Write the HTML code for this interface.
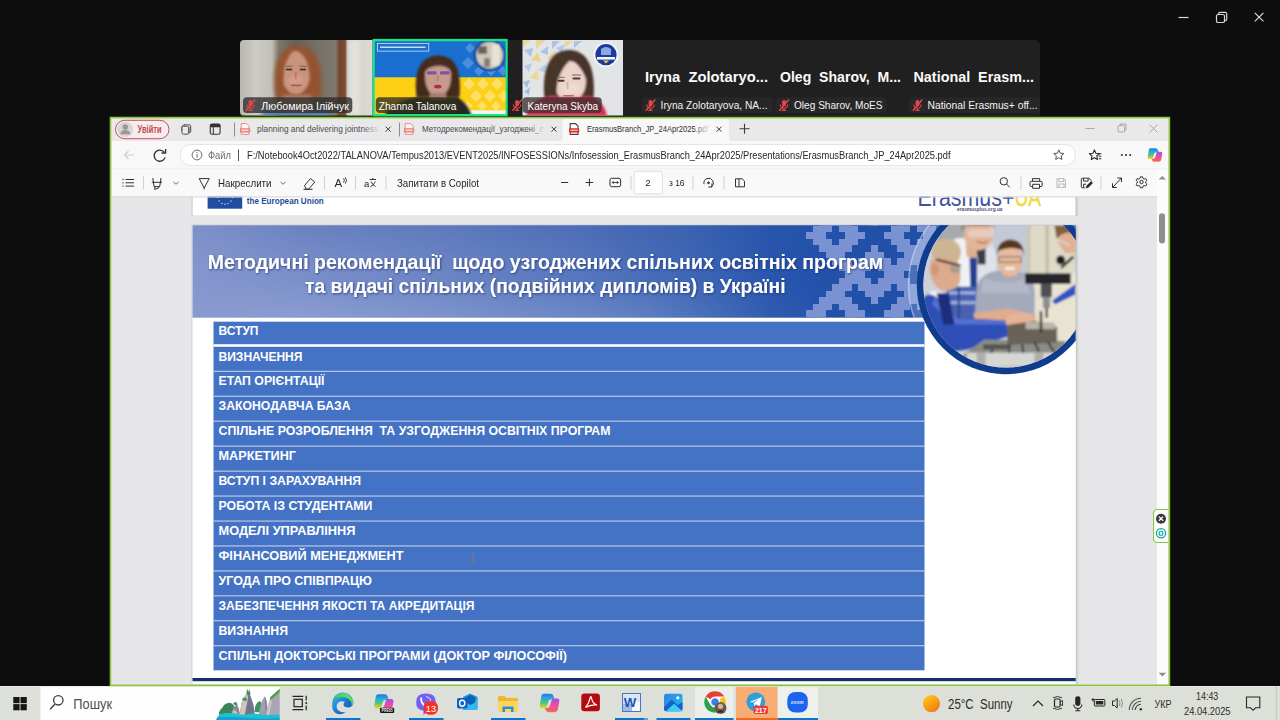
<!DOCTYPE html>
<html lang="uk">
<head>
<meta charset="utf-8">
<title>Zoom Meeting</title>
<style>
*{box-sizing:border-box;margin:0;padding:0}
html,body{width:1280px;height:720px;overflow:hidden;background:#0d0d0d;font-family:"Liberation Sans",sans-serif;}
.abs{position:absolute}
#root{position:relative;width:1280px;height:720px;overflow:hidden;background:#0d0d0d}
svg{display:block}
svg text{font-family:"Liberation Sans",sans-serif}
/* ---------- zoom strip ---------- */
#strip{position:absolute;left:240px;top:40px;width:800px;height:76px;background:#1f1f1f;border-radius:6px 6px 0 0;overflow:hidden}
/* ---------- browser ---------- */
#win{position:absolute;left:110px;top:117px;width:1060px;height:569px;background:#f4f4f5}
#winin{position:absolute;left:2px;top:2px;width:1056px;height:565px;background:#e6e6e8;overflow:hidden}
#winblur{position:absolute;left:0;top:0;width:1056px;height:565px;filter:blur(.45px)}
#chrome{position:absolute;left:0;top:0}
#view{position:absolute;left:0;top:77px}
/* ---------- taskbar ---------- */
#task{position:absolute;left:0;top:686px;width:1280px;height:34px;background:#dee2dc}
</style>
</head>
<body>
<div id="root">

<!-- ZOOM WINDOW CONTROLS -->
<svg class="abs" style="left:1170px;top:5px" width="110" height="26" viewBox="0 0 110 26">
 <g stroke="#d9d9d9" stroke-width="1.2" fill="none">
  <path d="M8.500 12.500h10"/>
  <rect x="46.500" y="9.500" width="8" height="8" rx="1.600"/><path d="M48.500 9.300v-0.300q0-1.600 1.600-1.600h5q1.600 0 1.600 1.600v5q0 1.600-1.600 1.600h-0.400"/>
  <path d="M84.800 7.800l8.600 8.600M93.400 7.800l-8.600 8.600"/>
 </g>
</svg>
<!-- PARTICIPANT STRIP -->
<svg class="abs" style="left:236px;top:36px" width="808" height="82" viewBox="236 36 808 82">
 <defs>
  <clipPath id="stripclip"><path d="M244,40 H1034 a6,6 0 0 1 6,6 V116 H240 V44 a4,4 0 0 1 4,-4 Z"/></clipPath>
  <clipPath id="t1c"><path d="M244,40 H372.600 V115.400 H244 a4,4 0 0 1 -4,-4 V44 a4,4 0 0 1 4,-4 Z"/></clipPath>
  <clipPath id="t2c"><rect x="374.800" y="41.200" width="130.700" height="72.900"/></clipPath>
  <clipPath id="t3c"><rect x="522.500" y="40" width="100.500" height="75.400"/></clipPath>
  <filter id="vb" x="-10%" y="-10%" width="120%" height="120%"><feGaussianBlur stdDeviation="1.1"/></filter>
  <filter id="vb2" x="-10%" y="-10%" width="120%" height="120%"><feGaussianBlur stdDeviation="2.2"/></filter>
  <filter id="vb05" x="-10%" y="-10%" width="120%" height="120%"><feGaussianBlur stdDeviation="0.6"/></filter>
  <linearGradient id="wall1" x1="0" y1="0" x2="1" y2="0">
   <stop offset="0" stop-color="#b9b7b2"/><stop offset=".12" stop-color="#cdcbc6"/><stop offset=".24" stop-color="#c2bfb9"/><stop offset=".29" stop-color="#80766a"/>
   <stop offset=".42" stop-color="#64605a"/><stop offset=".6" stop-color="#77736a"/><stop offset=".72" stop-color="#7f786e"/><stop offset=".745" stop-color="#74452f"/>
   <stop offset=".79" stop-color="#7a4a34"/><stop offset=".81" stop-color="#d2cfc8"/><stop offset="1" stop-color="#dcdad5"/>
  </linearGradient>
  <g id="mic">
   <rect x="3.600" y="1" width="3.800" height="6.400" rx="1.900" fill="#e5454d"/>
   <path d="M1.800 5.600a3.700 3.700 0 0 0 7.400 0M5.500 9.300v2M3.400 11.400h4.200" stroke="#e5454d" stroke-width="1.100" fill="none"/>
   <path d="M10.300 0.600L0.800 11.800" stroke="#e5454d" stroke-width="1.500"/>
  </g>
 </defs>
 <g clip-path="url(#stripclip)">
  <rect x="240" y="40" width="800" height="76" fill="#202020"/>
 </g>
 <!-- tile 1 -->
 <g clip-path="url(#t1c)">
  <rect x="240" y="40" width="133" height="76" fill="url(#wall1)"/>
  <rect x="349" y="40" width="11" height="76" fill="#efeeeb" fill-opacity=".55" filter="url(#vb2)"/>
  <g filter="url(#vb2)">
   <path d="M276,98 Q270,60 288,48 Q298,42 309,48 Q325,60 321,98 Z" fill="#94532f"/>
   <rect x="283" y="96" width="28" height="20" fill="#b98d7a"/>
   <rect x="262" y="110" width="68" height="8" fill="#5b7fb0"/>
  </g>
  <g filter="url(#vb)">
   <path d="M281.500,70 Q281,52 296,51 Q310.500,52 310.500,70 Q310.500,86 303,92 Q296,96.500 289,92 Q281.500,86 281.500,70 Z" fill="#c9937e"/>
   <path d="M280,72 Q279,52 295,49 Q288,56 285,66 Q283,76 284,88 Z" fill="#9a5733"/>
   <path d="M296,49 Q313,51 312,74 L310,88 Q310,66 304,57 Z" fill="#9a5733"/>
   <ellipse cx="296" cy="80" rx="8" ry="5" fill="#d19c88"/>
  </g>
  <g filter="url(#vb05)">
   <rect x="285.800" y="68.600" width="6.500" height="1.900" rx=".9" fill="#4a3f3f"/><rect x="299.600" y="68.600" width="6.500" height="1.900" rx=".9" fill="#4a3f3f"/>
   <rect x="285.300" y="65.700" width="7.500" height="1" fill="#8a5a44"/><rect x="299.300" y="65.700" width="7.500" height="1" fill="#8a5a44"/>
   <rect x="294.800" y="72" width="2" height="7" fill="#b98069"/>
   <rect x="291" y="84.600" width="10.500" height="1.700" rx=".8" fill="#a5605a"/>
  </g>
 </g>
 <rect x="243" y="97.300" width="109.300" height="15.800" rx="4" fill="#2d2b2a" fill-opacity=".78"/>
 <use href="#mic" x="245" y="99"/>
 <text x="261.300" y="109.600" font-size="11.600" fill="#fff" textLength="87.700" lengthAdjust="spacingAndGlyphs">Любомира Ілійчук</text>
 <!-- tile 2 (active speaker) -->
 <rect x="372.600" y="38.900" width="135.100" height="77.400" fill="#18e587"/>
 <g clip-path="url(#t2c)">
  <rect x="374" y="41" width="133" height="36.500" fill="#1b6fd1"/>
  <rect x="374" y="77.400" width="133" height="37" fill="#fdd015"/>
  <rect x="455" y="110.300" width="52" height="4" fill="#f4f4f4"/>
  <g fill="#4b8fdc" filter="url(#vb05)">
   <path d="M465,48l5,-5 5,5 -5,5zM462,63l6,-6 6,6 -6,6zM474,71l5,-5 5,5 -5,5zM486,71l5,-5 5,5 -5,5zM498,71l5,-5 5,5 -5,5zM492,64l4,-4 4,4 -4,4zM501,58l4,-4 4,4 -4,4z"/>
  </g>
  <g fill="#fddf6a" filter="url(#vb05)">
   <path d="M463,84l6,-6 6,6 -6,6zM477,84l6,-6 6,6 -6,6zM491,84l6,-6 6,6 -6,6zM470,96l6,-6 6,6 -6,6zM484,96l6,-6 6,6 -6,6zM498,96l6,-6 6,6 -6,6zM463,106l5,-5 5,5 -5,5zM477,106l5,-5 5,5 -5,5zM491,106l5,-5 5,5 -5,5z"/>
  </g>
  <rect x="377.300" y="43.500" width="51.500" height="7.600" fill="none" stroke="#e9f1fb" stroke-width=".7"/>
  <rect x="380" y="46.500" width="45.500" height="1.500" fill="#f3f7fd" fill-opacity=".8"/>
  <circle cx="489.700" cy="55.300" r="16.300" fill="#1c4aa3"/>
  <g filter="url(#vb)"><circle cx="489.700" cy="55.300" r="13.800" fill="#cfc9bd"/>
   <rect x="478" y="46" width="9" height="8" fill="#6d6458"/><rect x="484" y="58" width="6" height="9" fill="#8a7a6a"/><rect x="492" y="44" width="8" height="22" fill="#e6e2d8"/></g>
  <g filter="url(#vb)">
   <path d="M416.500,97 Q413,68 426,59 Q438,52.500 450,58.500 Q462,67 459.500,97 Z" fill="#45291f"/>
   <path d="M384,116 Q392,101 418,97.500 L458,97.500 Q468,104 472,116 Z" fill="#282828"/>
   <path d="M425,76 Q424.500,63 438,62.500 Q451.500,63 451,76 Q451,88 445,93.500 Q438,97.500 431,93.500 Q425,88 425,76 Z" fill="#c79a8d"/>
   <path d="M423,74 Q424,60 440,60 Q452,61 453,74 Q448,65 438,66 Q428,66 423,74 Z" fill="#4a2d22"/>
   <rect x="430" y="93" width="16" height="6" fill="#a77d70"/>
  </g>
  <g filter="url(#vb05)"><rect x="427" y="71.200" width="9.500" height="3.400" rx="1.400" fill="#6a4aa8" fill-opacity=".85"/><rect x="440" y="71.200" width="9.500" height="3.400" rx="1.400" fill="#6a4aa8" fill-opacity=".85"/>
   <rect x="436.800" y="75" width="2" height="6" fill="#b58578"/>
   <ellipse cx="437.800" cy="86.600" rx="3.800" ry="1.900" fill="#ae2f3c"/></g>
 </g>
 <rect x="375.800" y="97.300" width="83.600" height="15.800" rx="4" fill="#33301f" fill-opacity=".8"/>
 <text x="378.800" y="109.600" font-size="11.600" fill="#fff" textLength="77.500" lengthAdjust="spacingAndGlyphs">Zhanna Talanova</text>
 <!-- tile 3 -->
 <g clip-path="url(#t3c)">
  <rect x="522" y="40" width="102" height="76" fill="#e3e4e6"/>
  <g filter="url(#vb05)">
   <path d="M523,40h7l-7,7z M536,40h10l-10,9z" fill="#ead692"/>
   <path d="M524,50l9,-2 -2,9z M540,52l8,-6 0,9z M552,41l8,0 -8,8z" fill="#a9c6e6"/>
   <path d="M531,60l7,-8 3,10z M547,58l8,-7 -1,10z" fill="#ead38c"/>
   <path d="M524,66l8,-3 -3,9z M538,70l8,-6 1,9z M556,48l9,-4 -3,9z" fill="#b4cce8"/>
   <path d="M530,78l7,-8 2,10z M545,73l5,-4 0,7z" fill="#ecd894"/>
   <path d="M523,82l7,-2 -3,8z M524,92l6,-5 -1,8z" fill="#9dbfe3"/>
   <path d="M564,41h8l-6,6z" fill="#ead692"/><path d="M574,41h8l-8,7z" fill="#a9c5e4"/>
  </g>
  <circle cx="606" cy="54.700" r="12.600" fill="#f2f3f6"/>
  <circle cx="606" cy="54.700" r="10.600" fill="#1a3b9d"/>
  <g filter="url(#vb05)"><path d="M597,57 h18 v2.600 h-18z" fill="#f4f6fb"/><path d="M601,49 q5,-4 10,0 v6 h-10z" fill="#8fa7dc"/><path d="M603,60.500 l3,3 3,-3z" fill="#e9c93f"/></g>
  <g filter="url(#vb)">
   <path d="M544.500,100 Q541,64 557,53 Q571,46 584,55.500 Q596,68 593.500,100 Z" fill="#47352c"/>
   <path d="M526,116 Q530,99 552,96 L590,96.500 Q604,100 607,116 Z" fill="#e02d5a"/>
   <path d="M554,80 Q554,64 569,61 Q584,62 586,80 Q586,92 580,97 L560,97 Q554,92 554,80 Z" fill="#edd3c7"/>
   <path d="M552,86 Q550,62 566,55 Q572,54 574,57 Q562,66 558,80 Q556,90 557,98 Z" fill="#47352c"/>
   <path d="M572,56 Q588,58 589,88 Q584,68 572,60 Z" fill="#47352c"/>
   <ellipse cx="571" cy="88" rx="8" ry="5" fill="#f0dbd0"/>
  </g>
  <g filter="url(#vb05)" fill="#4a3a38"><rect x="557.500" y="79.800" width="7" height="1.900" rx=".9"/><rect x="572.500" y="77.500" width="8" height="1.900" rx=".9"/>
   <rect x="556.500" y="76.800" width="8" height="1" fill="#7a5f55"/><rect x="572" y="74.500" width="9" height="1" fill="#7a5f55"/>
   <rect x="566.500" y="82" width="2" height="7" fill="#d9b5a6"/><rect x="563" y="95" width="11" height="1.600" rx=".8" fill="#b8686e"/></g>
 </g>
 <rect x="522.500" y="97.300" width="79.300" height="15.800" rx="4" fill="#3a3230" fill-opacity=".78"/>
 <use href="#mic" x="511.600" y="99"/>
 <text x="527.600" y="109.600" font-size="11.600" fill="#fff" textLength="70.500" lengthAdjust="spacingAndGlyphs">Kateryna Skyba</text>
 <!-- tiles 4-6 : name only -->
 <g font-weight="bold" font-size="14.200" fill="#fbfbfb">
  <text x="645" y="82.200" textLength="123" lengthAdjust="spacingAndGlyphs" xml:space="preserve">Iryna  Zolotaryo...</text>
  <text x="780" y="82.200" textLength="121" lengthAdjust="spacingAndGlyphs" xml:space="preserve">Oleg  Sharov,  M...</text>
  <text x="913.500" y="82.200" textLength="120.500" lengthAdjust="spacingAndGlyphs" xml:space="preserve">National  Erasm...</text>
 </g>
 <g fill="#272727"><rect x="641.700" y="97.300" width="131.300" height="15.600" rx="4"/><rect x="775.300" y="97.300" width="111" height="15.600" rx="4"/><rect x="908.600" y="97.300" width="131.400" height="15.600" rx="4"/></g>
 <use href="#mic" x="645" y="99"/><use href="#mic" x="778.500" y="99"/><use href="#mic" x="912" y="99"/>
 <g font-size="11.200" fill="#f3f3f3">
  <text x="660.600" y="109.300" textLength="107" lengthAdjust="spacingAndGlyphs">Iryna Zolotaryova, NA...</text>
  <text x="794" y="109.300" textLength="88.500" lengthAdjust="spacingAndGlyphs">Oleg Sharov, MoES</text>
  <text x="927.500" y="109.300" textLength="110" lengthAdjust="spacingAndGlyphs">National Erasmus+ off...</text>
 </g>
</svg>
<!-- BROWSER WINDOW -->
<div id="win"><div id="winin"><div id="winblur">
<svg id="chrome" width="1056" height="79" viewBox="112 119 1056 79" style="z-index:2">
 <defs>
  <linearGradient id="fade1" x1="0" y1="0" x2="1" y2="0"><stop offset="0" stop-color="#e9e9eb" stop-opacity="0"/><stop offset="1" stop-color="#e9e9eb"/></linearGradient>
  <linearGradient id="fade2" x1="0" y1="0" x2="1" y2="0"><stop offset="0" stop-color="#f8f8f9" stop-opacity="0"/><stop offset="1" stop-color="#f8f8f9"/></linearGradient>
  <linearGradient id="cop" x1="0" y1="0" x2="1" y2="1"><stop offset="0" stop-color="#2a9df4"/><stop offset=".35" stop-color="#36c5b0"/><stop offset=".6" stop-color="#f7b731"/><stop offset=".8" stop-color="#ee5a6f"/><stop offset="1" stop-color="#a259ff"/></linearGradient>
  <linearGradient id="cpL" x1="0" y1="0" x2="0" y2="1"><stop offset="0" stop-color="#2a6fe8"/><stop offset=".3" stop-color="#1fb0dd"/><stop offset=".6" stop-color="#46c57f"/><stop offset="1" stop-color="#f6d418"/></linearGradient>
  <linearGradient id="cpR" x1="0" y1="0" x2="0" y2="1"><stop offset="0" stop-color="#a84fe6"/><stop offset=".55" stop-color="#ef4f9c"/><stop offset="1" stop-color="#f66c45"/></linearGradient>
  <g id="copilot">
   <path d="M4.600,0.500 h6 q2.700,0 3.400,2.400 l0.900,3 h-3 q-2.300,0 -3,2.200 l-1.500,4.800 q-0.600,1.800 -2.500,1.800 h-2.200 q-2.600,0 -2.200,-2.700 l1.300,-8.300 q0.500,-3.200 2.800,-3.200z" fill="url(#cpL)"/>
   <path d="M12.400,5.200 h5 q2.700,0 2.200,2.700 l-1.300,7.600 q-0.500,3 -3.300,3 h-5.600 q-2.600,0 -3.300,-2.400 l-0.500,-1.700 h2 q2,0 2.700,-2 l1.700,-5.400 q0.500,-1.800 0.400,-1.800z" fill="url(#cpR)"/>
  </g>
  <g id="pdfico">
   <path d="M1.200 0.600h5.300l2.500 2.500v8.300h-7.800z" fill="#fdf6f5" stroke="#e9827c" stroke-width=".9"/>
   <rect x="0" y="5.200" width="10.200" height="4.300" rx=".8" fill="#ec7f79"/><rect x="1.500" y="6.600" width="7.200" height="1.400" fill="#fbe3e1"/>
  </g>
  <g id="pdficoA">
   <path d="M1.200 0.600h5.300l2.500 2.500v8.300h-7.800z" fill="#fff" stroke="#5a3a3a" stroke-width="1.100"/>
   <rect x="0" y="5.200" width="10.200" height="4.300" rx=".8" fill="#d92c25"/><rect x="1.500" y="6.600" width="7.200" height="1.300" fill="#f6c9c6"/>
  </g>
  <g id="xs"><path d="M0.500 0.500l5 5M5.500 0.500l-5 5" stroke="#3b3b3b" stroke-width="1" fill="none"/></g>
 </defs>
 <!-- tab strip -->
 <rect x="112" y="119" width="1056" height="22.500" fill="#e9e9eb"/>
 <rect x="112" y="141" width="1056" height="28" fill="#f8f8f9"/>
 <rect x="112" y="169" width="1045" height="27.300" fill="#f9f9fa"/>
 <rect x="1157" y="169" width="11" height="29" fill="#fcfcfc"/>
 <rect x="112" y="168.500" width="1056" height=".8" fill="#ececee"/>
 <rect x="112" y="196.300" width="1045" height=".8" fill="#d9d9dc"/><rect x="112" y="197.100" width="1045" height=".8" fill="#e0e0e3" fill-opacity=".7"/>
 <!-- profile pill -->
 <rect x="115.500" y="120.300" width="53.500" height="18.400" rx="9.200" fill="#f5eded" stroke="#cc5058" stroke-width="1"/>
 <circle cx="125.300" cy="129.500" r="7.800" fill="#d8d5d5"/>
 <circle cx="125.300" cy="127" r="2.800" fill="#9b9898"/><path d="M120.300 134.200a5 4.200 0 0 1 10 0z" fill="#9b9898"/>
 <text x="137.600" y="133.200" font-size="10.200" font-weight="bold" fill="#c8454e" textLength="24" lengthAdjust="spacingAndGlyphs">Увійти</text>
 <!-- workspaces + tab actions -->
 <g stroke="#555" stroke-width="1" fill="none"><rect x="184.200" y="124.800" width="6.500" height="8" rx="1.500"/><path d="M181.800 131v-4.500l3-2.300M186.500 134.300l3.500-2.200v-5.500"/><rect x="182" y="126.200" width="6.600" height="8" rx="1.500" fill="#e9e9eb"/></g>
 <rect x="210.300" y="124" width="9.800" height="10.200" rx="1.800" fill="none" stroke="#333" stroke-width="1.100"/><rect x="210.300" y="124" width="9.800" height="3.200" rx="1" fill="#333"/><path d="M213.300 127v7" stroke="#333" stroke-width="1"/>
 <path d="M234.500 122.500v14M399.500 122.500v14" stroke="#8c8c90" stroke-width="1"/>
 <!-- tab 1 -->
 <use href="#pdfico" x="240" y="123"/>
 <text x="257" y="132.400" font-size="9.300" fill="#4a4a4a" textLength="121" lengthAdjust="spacingAndGlyphs">planning and delivering jointness</text>
 <rect x="362" y="122" width="18" height="15" fill="url(#fade1)"/>
 <use href="#xs" x="385.200" y="126.200"/>
 <!-- tab 2 -->
 <use href="#pdfico" x="404" y="123"/>
 <text x="422" y="132.400" font-size="9.300" fill="#4a4a4a" textLength="121.500" lengthAdjust="spacingAndGlyphs">Методрекомендації_узгоджені_с</text>
 <rect x="528" y="122" width="18" height="15" fill="url(#fade1)"/>
 <use href="#xs" x="551" y="126.200"/>
 <!-- active tab -->
 <path d="M557.500 141.500 q5 0 5-5 v-14 q0-3.500 3.500-3.500 h159.500 q3.500 0 3.500 3.500 v14 q0 5 5 5z" fill="#f8f8f9"/>
 <use href="#pdficoA" x="569" y="123"/>
 <text x="587" y="132.400" font-size="9.300" fill="#2f2f2f" textLength="121.500" lengthAdjust="spacingAndGlyphs">ErasmusBranch_JP_24Apr2025.pdf</text>
 <rect x="694" y="122" width="16" height="15" fill="url(#fade2)"/>
 <use href="#xs" x="716" y="126.200"/>
 <path d="M739.500 128.700h10M744.500 123.700v10" stroke="#3b3b3b" stroke-width="1.100"/>
 <!-- window controls -->
 <g stroke="#a9a9ad" stroke-width="1" fill="none"><path d="M1085.500 128.500h9"/><rect x="1118" y="125.500" width="6.500" height="6.500" rx="1"/><path d="M1120 125.500v-1.500h6v6h-1.500"/><path d="M1149.500 124.500l8 8M1157.500 124.500l-8 8"/></g>
 <!-- address row -->
 <path d="M124.500 155h9.500M128.500 151l-4 4 4 4" stroke="#cfcfd2" stroke-width="1.200" fill="none"/>
 <path d="M164.200 152.200a5.600 5.600 0 1 0 .9 5.200" stroke="#2e2e2e" stroke-width="1.300" fill="none"/><path d="M165.600 149v4h-4" stroke="#2e2e2e" stroke-width="1.300" fill="none"/>
 <rect x="180.300" y="144.500" width="895.200" height="21" rx="10.500" fill="#fff" stroke="#e2e2e5" stroke-width=".9"/>
 <circle cx="197" cy="155" r="4.900" fill="none" stroke="#6b6b6b" stroke-width="1"/><path d="M197 154.200v3.200" stroke="#6b6b6b" stroke-width="1.100"/><circle cx="197" cy="152.600" r=".65" fill="#6b6b6b"/>
 <text x="208" y="158.600" font-size="10.300" fill="#6e6e6e" textLength="23" lengthAdjust="spacingAndGlyphs">Файл</text>
 <path d="M238.500 149.500v11.500" stroke="#555" stroke-width="1"/>
 <text x="247" y="158.700" font-size="10.400" fill="#262626" textLength="703.500" lengthAdjust="spacingAndGlyphs">F:/Notebook4Oct2022/TALANOVA/Tempus2013/EVENT2025/INFOSESSIONs/Infosession_ErasmusBranch_24Apr2025/Presentations/ErasmusBranch_JP_24Apr2025.pdf</text>
 <path id="star" d="M1058.80 149.90 L1060.27 153.18 L1063.84 153.56 L1061.18 155.97 L1061.92 159.49 L1058.80 157.70 L1055.68 159.49 L1056.42 155.97 L1053.76 153.56 L1057.33 153.18Z" fill="none" stroke="#555" stroke-width="1" stroke-linejoin="round"/>
 <path d="M1094.40 149.90 L1095.87 153.18 L1099.44 153.56 L1096.78 155.97 L1097.52 159.49 L1094.40 157.70 L1091.28 159.49 L1092.02 155.97 L1089.36 153.56 L1092.93 153.18Z" fill="#f8f8f9" stroke="#2b2b2b" stroke-width="1.1" stroke-linejoin="round"/>
 <path d="M1097.8 153.700h3.500M1098.600 156.200h2.700M1098.800 158.700h2.500" stroke="#2b2b2b" stroke-width="1"/>
 <g fill="#2b2b2b"><circle cx="1121.800" cy="155" r="1"/><circle cx="1126" cy="155" r="1"/><circle cx="1130.200" cy="155" r="1"/></g>
 <use href="#copilot" transform="translate(1147.300,147.800) scale(0.760)"/>
 <!-- pdf toolbar -->
 <g stroke="#303030" stroke-width="1" fill="none">
  <path d="M125.500 179.500h8.500M125.500 182.800h8.500M125.500 186.100h8.500"/><path d="M122.500 179.500h1M122.500 182.800h1M122.500 186.100h1" stroke-width="1.300"/>
  <path d="M152.800 178l1.300 8.600h5.600l1.300-8.600M151.800 182.300h10.400M155 186.600l-.3 2.800 4-1.500v-1.300"/>
  <path d="M199.200 178.600h10l-5 9.400zM204.200 188v1.500"/>
  <path d="M304.500 185.500l6-7 4.200 3.600-6 7h-2.600zM303.500 189.300h9"/>
  <path d="M561 182.500h7.200M585.600 182.500h7.600M589.400 178.700v7.600" stroke-width="1"/>
  <rect x="610" y="178.300" width="10.600" height="8.400" rx="1.600"/><path d="M612.300 182.500h6M613.600 181.200l-1.300 1.300 1.300 1.300M617 181.200l1.300 1.300-1.300 1.300" stroke-width=".9"/>
  <path d="M704.100 184.200a4.700 4.700 0 1 1 7.300 2.600M711.900 183.400v3.600h-3.600"/><circle cx="708.500" cy="182.800" r=".9" fill="#2b2b2b"/>
  <path d="M735.500 178.800h3.500v8h-3.500zM739 178.800h3.200l2.300 2.300v5.700H739"/>
  <circle cx="1003.800" cy="181.300" r="3.700"/><path d="M1006.500 184l3.300 3.300"/>
  <path d="M1032.500 181.200v-2.600h7.200v2.600M1032.600 186.500h-1.400q-1.200 0-1.200-1.200v-2.700q0-1.300 1.300-1.300h9.600q1.300 0 1.300 1.300v2.700q0 1.200-1.200 1.200h-1.400M1032.700 184.300h6.800v4h-6.800z"/>
  <path d="M1082.300 178.200h6.600l2.500 2.400v2M1082.300 178.200q-1 0-1 1v7.600q0 1 1 1h2.500M1083.500 178.300v2.800h4.600v-2.800M1083.600 187.600v-3.400h2.600"/>
  <path d="M1085.500 188.600l.5-2.700 5-5 2.200 2.200-5 5z" fill="#2b2b2b" stroke="#f9f9fa" stroke-width=".5"/>
  <path d="M1112.500 187.500l9-9.500M1117.300 178h4.200v4.200M1112.500 183.300v4.200h4.200"/>
  <g transform="translate(0,-0.800)"><circle cx="1141.500" cy="182.800" r="1.700"/>
  <path d="M1140.400 177.600h2.200l.4 1.600 1.200.7 1.600-.5 1.100 1.900-1.200 1.100v1.400l1.200 1.100-1.100 1.900-1.600-.5-1.200.7-.4 1.600h-2.200l-.4-1.600-1.200-.7-1.600.5-1.100-1.900 1.200-1.100v-1.400l-1.200-1.100 1.100-1.900 1.600.5 1.200-.7z"/></g>
 </g>
 <g stroke="#bdbdc2" stroke-width="1.100" fill="none"><path d="M1057 178.500h6.500l2 2v7h-8.500zM1059 178.500v3h4.500v-3M1059 187.500v-3.500h5v3.500"/></g>
 <g stroke="#6a6a6a" stroke-width="1" fill="none"><path d="M173.500 181.800l2.500 2.500 2.500-2.500M280.500 181.800l2.500 2.500 2.500-2.500"/></g>
 <g stroke="#d2d2d6" stroke-width="1"><path d="M143.500 176v13.500M324.500 176v13.500M355.500 176v13.500M386 176v13.500M631 176v13.500M693 176v13.500M724 176v13.500M1021 176v13.500M1101 176v13.500"/></g>
 <text x="218" y="186.500" font-size="10.400" fill="#262626" textLength="53.500" lengthAdjust="spacingAndGlyphs">Накреслити</text>
 <text x="334.500" y="187" font-size="11.500" fill="#262626">A</text><path d="M343.500 178.300q1.800 1.800 0 4.200M345.200 177.300q2.800 3 0 6.300" stroke="#262626" stroke-width=".9" fill="none"/>
 <text x="364" y="186.600" font-size="9.500" fill="#262626">a</text>
 <path d="M369.500 179.500h6.500M372.800 178v2M371 181.500q1.500 3.500 4.500 5M375.300 181.500q-1.500 4-5 5.300" stroke="#262626" stroke-width=".9" fill="none"/>
 <text x="397" y="186.500" font-size="10.400" fill="#262626" textLength="82" lengthAdjust="spacingAndGlyphs">Запитати в Copilot</text>
 <rect x="634" y="171.300" width="28.300" height="22.600" rx="2.500" fill="#fff" stroke="#dedee2" stroke-width="1"/>
 <text x="645.300" y="186.300" font-size="9.800" fill="#262626">2</text>
 <text x="669" y="186.300" font-size="9.800" fill="#262626" textLength="15.500" lengthAdjust="spacingAndGlyphs">з 16</text>
 <!-- scrollbar top arrow -->
 <path d="M1158.600 179.600l3.700-3.500 3.700 3.500z" fill="#8f8f93"/>
</svg>

<!-- PDF VIEWPORT -->
<svg id="view" width="1045" height="488" viewBox="112 196 1045 488">
 <defs>
  <linearGradient id="bn" x1="0" y1="0" x2="1" y2="0">
   <stop offset="0" stop-color="#8496cd"/><stop offset=".12" stop-color="#7a8fca"/><stop offset=".28" stop-color="#6b85c5"/><stop offset=".43" stop-color="#5877bf"/>
   <stop offset=".56" stop-color="#3f67b5"/><stop offset=".66" stop-color="#2855ad"/><stop offset=".75" stop-color="#2150a9"/><stop offset="1" stop-color="#2150a9"/>
  </linearGradient>
  <linearGradient id="bnv" x1="0" y1="0" x2="0" y2="1">
   <stop offset="0" stop-color="#21408f" stop-opacity=".16"/><stop offset=".45" stop-color="#21408f" stop-opacity="0"/><stop offset=".55" stop-color="#fff" stop-opacity="0"/><stop offset="1" stop-color="#fff" stop-opacity=".13"/>
  </linearGradient>
  <linearGradient id="lmg" x1="0" y1="0" x2="1" y2="0"><stop offset="0" stop-color="#fff" stop-opacity=".35"/><stop offset=".12" stop-color="#fff"/><stop offset=".5" stop-color="#fff"/><stop offset=".72" stop-color="#fff" stop-opacity="0"/></linearGradient>
  <mask id="lm"><rect x="192.5" y="225.200" width="883.2" height="92.5" fill="url(#lmg)"/></mask>
  <linearGradient id="pgr" x1="0" y1="0" x2="1" y2="0"><stop offset="0" stop-color="#b9b9bd"/><stop offset=".35" stop-color="#d2d2d5"/><stop offset="1" stop-color="#e6e6e8"/></linearGradient>
  <linearGradient id="pgl" x1="1" y1="0" x2="0" y2="0"><stop offset="0" stop-color="#cfcfd2"/><stop offset="1" stop-color="#e6e6e8"/></linearGradient>
  <linearGradient id="pgsh" x1="0" y1="0" x2="0" y2="1"><stop offset="0" stop-color="#c9c9cc"/><stop offset="1" stop-color="#e6e6e8"/></linearGradient>
  <clipPath id="bnclip"><rect x="192.5" y="225.2" width="883.2" height="92.5"/></clipPath>
  <clipPath id="pgclip"><rect x="192.5" y="225.2" width="883.2" height="460"/></clipPath>
  <clipPath id="p1clip"><rect x="192.5" y="196" width="883.2" height="19.2"/></clipPath>
  <clipPath id="phclip"><circle cx="1006" cy="285" r="82.6"/></clipPath>
  <filter id="b1" x="-20%" y="-20%" width="140%" height="140%"><feGaussianBlur stdDeviation="1"/></filter>
  <filter id="b2" x="-20%" y="-20%" width="140%" height="140%"><feGaussianBlur stdDeviation="2"/></filter>
  <filter id="pb" x="-5%" y="-5%" width="110%" height="110%"><feGaussianBlur stdDeviation="5.5"/></filter>
  <filter id="b05" x="-20%" y="-20%" width="140%" height="140%"><feGaussianBlur stdDeviation="0.5"/></filter>
  <filter id="tsh" x="-5%" y="-30%" width="110%" height="170%"><feDropShadow dx="0.8" dy="1" stdDeviation="0.9" flood-color="#1b2f66" flood-opacity=".75"/></filter>
 </defs>
 <rect x="112" y="196" width="1045" height="488" fill="#e6e6e8"/>
 <!-- page 1 tail -->
 <rect x="191.5" y="196" width="885.2" height="21.5" fill="url(#pgsh)"/>
 <rect x="192.5" y="196" width="883.2" height="19.2" fill="#fff"/>
 <g clip-path="url(#p1clip)">
  <rect x="207.600" y="190" width="34.600" height="18.700" fill="#1f4ea1"/>
  <g fill="#dfe2d8"><circle cx="219" cy="201" r=".7"/><circle cx="222" cy="203.500" r=".7"/><circle cx="225" cy="204.300" r=".7"/><circle cx="228" cy="203.500" r=".7"/><circle cx="231" cy="201" r=".7"/><circle cx="217.800" cy="197.500" r=".7"/><circle cx="232.200" cy="197.500" r=".7"/></g>
  <text x="246.800" y="204.300" font-size="9.6" font-weight="bold" fill="#1e4c97" textLength="77" lengthAdjust="spacingAndGlyphs">the European Union</text>
  <text x="917.500" y="205.600" font-size="26" fill="#41529b" textLength="97" lengthAdjust="spacingAndGlyphs">Erasmus+</text>
  <text x="1014.500" y="205.600" font-size="26" fill="#f1d93f" stroke="#f1d93f" stroke-width=".5" textLength="26.500" lengthAdjust="spacingAndGlyphs">UA</text>
  <text x="957" y="211.300" font-size="5.2" font-weight="bold" fill="#4b4f78" textLength="45.500" lengthAdjust="spacingAndGlyphs">erasmusplus.org.ua</text>
 </g>
 <!-- page 2 -->
 <rect x="1075.700" y="225.200" width="3.600" height="461" fill="url(#pgr)"/><rect x="1075.700" y="196" width="3.600" height="20" fill="url(#pgr)"/><rect x="190.500" y="225.200" width="2" height="461" fill="url(#pgl)"/><rect x="190.500" y="196" width="2" height="20" fill="url(#pgl)"/><rect x="192" y="224.400" width="884" height="1" fill="#d4d4d7"/>
 <rect x="192.5" y="225.200" width="883.2" height="460" fill="#fff"/>
 <rect x="192.5" y="225.200" width="883.2" height="92.5" fill="url(#bn)"/>
 <rect x="192.5" y="225.200" width="883.2" height="92.5" fill="url(#bnv)" mask="url(#lm)"/>
 <g clip-path="url(#bnclip)"><g fill="#7a92d2" shape-rendering="crispEdges"><rect x="819.45" y="219.45" width="32.50" height="6.50"/><rect x="871.45" y="219.45" width="6.50" height="6.50"/><rect x="897.45" y="219.45" width="32.50" height="6.50"/><rect x="949.45" y="219.45" width="6.50" height="6.50"/><rect x="975.45" y="219.45" width="0.00" height="6.50"/><rect x="812.95" y="225.95" width="19.50" height="6.50"/><rect x="838.95" y="225.95" width="19.50" height="6.50"/><rect x="890.95" y="225.95" width="19.50" height="6.50"/><rect x="916.95" y="225.95" width="19.50" height="6.50"/><rect x="968.95" y="225.95" width="6.50" height="6.50"/><rect x="806.45" y="232.45" width="19.50" height="6.50"/><rect x="845.45" y="232.45" width="19.50" height="6.50"/><rect x="884.45" y="232.45" width="19.50" height="6.50"/><rect x="923.45" y="232.45" width="19.50" height="6.50"/><rect x="962.45" y="232.45" width="13.00" height="6.50"/><rect x="812.95" y="238.95" width="19.50" height="6.50"/><rect x="838.95" y="238.95" width="19.50" height="6.50"/><rect x="890.95" y="238.95" width="19.50" height="6.50"/><rect x="916.95" y="238.95" width="19.50" height="6.50"/><rect x="968.95" y="238.95" width="6.50" height="6.50"/><rect x="819.45" y="245.45" width="32.50" height="6.50"/><rect x="871.45" y="245.45" width="6.50" height="6.50"/><rect x="897.45" y="245.45" width="32.50" height="6.50"/><rect x="949.45" y="245.45" width="6.50" height="6.50"/><rect x="975.45" y="245.45" width="0.00" height="6.50"/><rect x="825.95" y="251.95" width="19.50" height="6.50"/><rect x="864.95" y="251.95" width="19.50" height="6.50"/><rect x="903.95" y="251.95" width="19.50" height="6.50"/><rect x="942.95" y="251.95" width="19.50" height="6.50"/><rect x="832.45" y="258.45" width="19.50" height="6.50"/><rect x="858.45" y="258.45" width="32.50" height="6.50"/><rect x="897.45" y="258.45" width="32.50" height="6.50"/><rect x="936.45" y="258.45" width="32.50" height="6.50"/><rect x="975.45" y="258.45" width="0.00" height="6.50"/><rect x="838.95" y="264.95" width="32.50" height="6.50"/><rect x="877.95" y="264.95" width="32.50" height="6.50"/><rect x="916.95" y="264.95" width="32.50" height="6.50"/><rect x="955.95" y="264.95" width="19.50" height="6.50"/><rect x="845.45" y="271.45" width="19.50" height="6.50"/><rect x="884.45" y="271.45" width="19.50" height="6.50"/><rect x="923.45" y="271.45" width="19.50" height="6.50"/><rect x="962.45" y="271.45" width="13.00" height="6.50"/><rect x="838.95" y="277.95" width="32.50" height="6.50"/><rect x="877.95" y="277.95" width="32.50" height="6.50"/><rect x="916.95" y="277.95" width="32.50" height="6.50"/><rect x="955.95" y="277.95" width="19.50" height="6.50"/><rect x="832.45" y="284.45" width="19.50" height="6.50"/><rect x="858.45" y="284.45" width="32.50" height="6.50"/><rect x="897.45" y="284.45" width="32.50" height="6.50"/><rect x="936.45" y="284.45" width="32.50" height="6.50"/><rect x="975.45" y="284.45" width="0.00" height="6.50"/><rect x="825.95" y="290.95" width="19.50" height="6.50"/><rect x="864.95" y="290.95" width="19.50" height="6.50"/><rect x="903.95" y="290.95" width="19.50" height="6.50"/><rect x="942.95" y="290.95" width="19.50" height="6.50"/><rect x="819.45" y="297.45" width="32.50" height="6.50"/><rect x="871.45" y="297.45" width="6.50" height="6.50"/><rect x="897.45" y="297.45" width="32.50" height="6.50"/><rect x="949.45" y="297.45" width="6.50" height="6.50"/><rect x="975.45" y="297.45" width="0.00" height="6.50"/><rect x="812.95" y="303.95" width="19.50" height="6.50"/><rect x="838.95" y="303.95" width="19.50" height="6.50"/><rect x="890.95" y="303.95" width="19.50" height="6.50"/><rect x="916.95" y="303.95" width="19.50" height="6.50"/><rect x="968.95" y="303.95" width="6.50" height="6.50"/><rect x="806.45" y="310.45" width="19.50" height="6.50"/><rect x="845.45" y="310.45" width="19.50" height="6.50"/><rect x="884.45" y="310.45" width="19.50" height="6.50"/><rect x="923.45" y="310.45" width="19.50" height="6.50"/><rect x="962.45" y="310.45" width="13.00" height="6.50"/><rect x="812.95" y="316.95" width="19.50" height="6.50"/><rect x="838.95" y="316.95" width="19.50" height="6.50"/><rect x="890.95" y="316.95" width="19.50" height="6.50"/><rect x="916.95" y="316.95" width="19.50" height="6.50"/><rect x="968.95" y="316.95" width="6.50" height="6.50"/></g></g>
 <!-- PHOTO -->
 <g clip-path="url(#pgclip)">
  <g clip-path="url(#bnclip)"><circle cx="1006" cy="285" r="97.5" fill="#dfe6f7" fill-opacity=".22" stroke="#e9eefb" stroke-opacity=".5" stroke-width="1.4"/></g>
  <circle cx="1006" cy="285" r="89.2" fill="#0f3c8c"/>
  <g clip-path="url(#phclip)" id="photo">
   <rect x="915" y="195" width="185" height="185" fill="#d5d7da"/>
   <g transform="translate(910,220) scale(0.22222)">
 <g filter="url(#pb)">
  <rect x="0" y="0" width="765" height="720" fill="#cdd0d6"/>
  <rect x="120" y="20" width="140" height="90" fill="#a7a9ad"/>
  <rect x="370" y="20" width="170" height="230" fill="#c3c9d6"/>
  <ellipse cx="330" cy="200" rx="60" ry="120" fill="#dfe2e8"/>
  <rect x="560" y="230" width="210" height="360" fill="#e9e3d2"/>
  <rect x="300" y="120" width="40" height="80" fill="#3a3d45"/>
  <!-- standing man -->
  <path d="M150,120 Q200,70 255,85 L305,170 L305,310 L170,310 Z" fill="#eff1f4"/>
  <path d="M250,110 L300,110 L300,175 L255,165 Z" fill="#dcae93"/>
  <ellipse cx="308" cy="70" rx="66" ry="66" fill="#e2b59a"/>
  <path d="M232,60 Q240,10 310,5 Q380,10 385,50 L380,25 L232,25 Z" fill="#8f7150"/>
  <rect x="262" y="42" width="115" height="36" rx="14" fill="#eef3f8" fill-opacity=".38"/>
  <path d="M300,95 Q325,112 350,95" stroke="#b5705e" stroke-width="7" fill="none"/>
  <path d="M268,170 L302,170 L302,335 L272,335 Z" fill="#22408f"/>
  <rect x="165" y="300" width="140" height="175" fill="#4862b0"/>
  <rect x="175" y="322" width="120" height="12" fill="#a9b9e2"/>
  <rect x="180" y="365" width="115" height="14" fill="#9fb0dd"/>
  <rect x="215" y="300" width="10" height="170" fill="#2a4594"/>
  <!-- young man -->
  <path d="M300,310 Q305,245 390,228 L505,236 Q560,262 562,335 L560,450 L290,450 Z" fill="#a5aabb"/>
  <path d="M330,260 Q420,300 520,262 L540,330 L320,330 Z" fill="#b3b8c8"/>
  <rect x="418" y="215" width="66" height="40" fill="#d9a98d"/>
  <ellipse cx="450" cy="182" rx="56" ry="70" fill="#e7b99d"/>
  <path d="M392,160 Q388,95 450,88 Q515,92 512,160 L505,135 Q450,115 398,138 Z" fill="#56391f"/>
  <path d="M400,166 h100 v24 h-100 Z" fill="none" stroke="#5b4f48" stroke-width="3.500"/>
  <rect x="428" y="213" width="44" height="11" rx="5" fill="#fbf6f2"/>
  <path d="M285,420 L440,398 L565,425 L565,470 L300,485 Z" fill="#e0ab8e"/>
  <!-- left man -->
  <ellipse cx="163" cy="145" rx="66" ry="62" fill="#cbb593"/>
  <path d="M88,220 Q85,165 140,165 L215,185 Q232,240 225,275 Q215,320 150,318 Q95,300 88,220 Z" fill="#dcaa8c"/>
  <ellipse cx="112" cy="222" rx="17" ry="28" fill="#cf967a"/>
  <path d="M118,178 L228,206" stroke="#26262a" stroke-width="9"/>
  <rect x="182" y="203" width="45" height="34" rx="10" fill="#8d8a88" fill-opacity=".55"/>
  <path d="M95,318 L150,325 L135,395 L85,370 Z" fill="#f3f3f6"/>
  <path d="M55,360 Q70,322 112,342 L210,440 L432,452 L448,522 L255,585 L140,600 Q50,500 55,360 Z" fill="#2e4fb8"/>
  <path d="M110,350 L215,442 L430,455 L432,470 L200,470 L100,380 Z" fill="#5271cf"/>
  <path d="M120,330 L175,330 L200,470 L150,470 Z" fill="#1b2f7d"/>
  <ellipse cx="497" cy="455" rx="68" ry="38" fill="#e5b397"/>
  <!-- machine -->
  <rect x="528" y="20" width="215" height="222" fill="#dedac6"/>
  <rect x="610" y="20" width="14" height="222" fill="#bfbba7"/>
  <rect x="528" y="20" width="14" height="222" fill="#c9c5b1"/>
  <circle cx="678" cy="180" r="20" fill="#1f1f22"/>
  <path d="M680,215 L735,165" stroke="#2b2b2e" stroke-width="12"/>
  <rect x="518" y="240" width="205" height="48" fill="#28282b"/>
  <rect x="588" y="286" width="50" height="62" fill="#4f5055"/>
  <rect x="598" y="346" width="32" height="50" fill="#8c8d93"/>
  <rect x="610" y="395" width="10" height="45" fill="#3c3c3f"/>
  <!-- right person -->
  <path d="M655,25 L745,25 L745,150 L700,150 Q655,110 655,25 Z" fill="#dfb092"/>
  <path d="M650,25 L745,25 L745,60 Q690,45 660,85 Z" fill="#80603e"/>
  <path d="M660,85 L720,115" stroke="#d9e2ea" stroke-width="9" stroke-opacity=".7"/>
  <path d="M640,362 L745,288 L745,335 L652,380 Z" fill="#2d54c2"/>
  <!-- vise and table -->
  <path d="M240,605 L335,538 L700,545 L700,600 L640,665 L250,655 Z" fill="#8b8b87"/>
  <path d="M438,472 L560,455 L662,482 L662,552 L438,562 Z" fill="#6a6256"/>
  <path d="M520,458 L650,462 L655,492 L520,490 Z" fill="#b9b4a8"/>
  <rect x="584" y="410" width="11" height="95" fill="#2f2f32"/>
  <rect x="255" y="597" width="392" height="62" fill="#d6d6d2"/>
  <rect x="300" y="597" width="40" height="62" fill="#aeaeaa"/>
  <rect x="560" y="597" width="40" height="62" fill="#aeaeaa"/>
  <g stroke="#3a3a3c" stroke-width="9"><path d="M380,560 L365,598"/><path d="M450,560 L445,598"/><path d="M505,560 L510,598"/><path d="M560,548 L580,592"/><path d="M620,548 L650,596"/></g>
  <rect x="330" y="560" width="120" height="22" fill="#55534e"/>
 </g>
</g>

  </g>
 </g>
 <!-- title -->
 <g font-weight="bold" fill="#fdfdff" filter="url(#tsh)" font-size="20.6">
  <text x="207.800" y="268.800" textLength="675.500" lengthAdjust="spacingAndGlyphs" xml:space="preserve">Методичні рекомендації  щодо узгоджених спільних освітніх програм</text>
  <text x="305" y="292.800" textLength="480.500" lengthAdjust="spacingAndGlyphs">та видачі спільних (подвійних дипломів) в Україні</text>
 </g>
 <!-- table -->
 <rect x="213.5" y="321.7" width="711" height="348.6" fill="#4472c4"/><rect x="213.5" y="344.2" width="711" height="2.6" fill="#fdfdfe"/><rect x="213.5" y="370.8" width="711" height="1.1" fill="#c3cfea"/><rect x="213.5" y="395.7" width="711" height="1.1" fill="#c3cfea"/><rect x="213.5" y="420.6" width="711" height="1.1" fill="#c3cfea"/><rect x="213.5" y="445.6" width="711" height="1.1" fill="#c3cfea"/><rect x="213.5" y="470.6" width="711" height="1.1" fill="#c3cfea"/><rect x="213.5" y="495.5" width="711" height="1.1" fill="#c3cfea"/><rect x="213.5" y="520.5" width="711" height="1.1" fill="#c3cfea"/><rect x="213.5" y="545.4" width="711" height="1.1" fill="#c3cfea"/><rect x="213.5" y="570.4" width="711" height="1.1" fill="#c3cfea"/><rect x="213.5" y="595.3" width="711" height="1.1" fill="#c3cfea"/><rect x="213.5" y="620.2" width="711" height="1.1" fill="#c3cfea"/><rect x="213.5" y="645.2" width="711" height="1.1" fill="#c3cfea"/>
 <g font-weight="bold" font-size="12.1" fill="#fff"><text x="218.5" y="335.4" textLength="40.0" lengthAdjust="spacingAndGlyphs" xml:space="preserve">ВСТУП</text><text x="218.5" y="360.5" textLength="84.0" lengthAdjust="spacingAndGlyphs" xml:space="preserve">ВИЗНАЧЕННЯ</text><text x="218.5" y="385.4" textLength="106.0" lengthAdjust="spacingAndGlyphs" xml:space="preserve">ЕТАП ОРІЄНТАЦІЇ</text><text x="218.5" y="410.4" textLength="132.0" lengthAdjust="spacingAndGlyphs" xml:space="preserve">ЗАКОНОДАВЧА БАЗА</text><text x="218.5" y="435.3" textLength="392.0" lengthAdjust="spacingAndGlyphs" xml:space="preserve">СПІЛЬНЕ РОЗРОБЛЕННЯ  ТА УЗГОДЖЕННЯ ОСВІТНІХ ПРОГРАМ</text><text x="218.5" y="460.3" textLength="77.5" lengthAdjust="spacingAndGlyphs" xml:space="preserve">МАРКЕТИНГ</text><text x="218.5" y="485.2" textLength="142.5" lengthAdjust="spacingAndGlyphs" xml:space="preserve">ВСТУП І ЗАРАХУВАННЯ</text><text x="218.5" y="510.2" textLength="154.0" lengthAdjust="spacingAndGlyphs" xml:space="preserve">РОБОТА ІЗ СТУДЕНТАМИ</text><text x="218.5" y="535.2" textLength="137.0" lengthAdjust="spacingAndGlyphs" xml:space="preserve">МОДЕЛІ УПРАВЛІННЯ</text><text x="218.5" y="560.1" textLength="185.0" lengthAdjust="spacingAndGlyphs" xml:space="preserve">ФІНАНСОВИЙ МЕНЕДЖМЕНТ</text><text x="218.5" y="585.1" textLength="153.5" lengthAdjust="spacingAndGlyphs" xml:space="preserve">УГОДА ПРО СПІВПРАЦЮ</text><text x="218.5" y="610.0" textLength="256.0" lengthAdjust="spacingAndGlyphs" xml:space="preserve">ЗАБЕЗПЕЧЕННЯ ЯКОСТІ ТА АКРЕДИТАЦІЯ</text><text x="218.5" y="635.0" textLength="69.5" lengthAdjust="spacingAndGlyphs" xml:space="preserve">ВИЗНАННЯ</text><text x="218.5" y="659.9" textLength="348.5" lengthAdjust="spacingAndGlyphs" xml:space="preserve">СПІЛЬНІ ДОКТОРСЬКІ ПРОГРАМИ (ДОКТОР ФІЛОСОФІЇ)</text></g>
 <!-- footer line -->
 <rect x="192.5" y="678" width="883.2" height="3.2" fill="#16306e"/>
 <!-- I-beam cursor -->
 <g stroke="#8a7a55" stroke-width=".9" fill="none"><path d="M473.500 554.500v8M471.800 554h3.400M471.800 563h3.400"/></g>
</svg>
<svg class="abs" style="left:1041px;top:77px" width="15" height="488" viewBox="1153 196 15 488">
 <rect x="1157" y="196" width="11" height="488" fill="#fcfcfc"/>
 <rect x="1159" y="213.200" width="6" height="30.300" rx="3" fill="#8e8e90"/>
 <path d="M1158.600 672.700l3.800 3.700 3.800-3.700z" fill="#8f8f93"/>
 <rect x="1153.500" y="509.500" width="18" height="33" rx="4" fill="#fdfdfd" stroke="#8cc63f" stroke-width="1.200"/>
 <circle cx="1161" cy="518.700" r="5" fill="#3a3a3c"/><path d="M1158.900 516.600l4.200 4.200M1163.100 516.600l-4.200 4.200" stroke="#fff" stroke-width="1.300"/>
 <circle cx="1161" cy="533.200" r="4.600" fill="#e9fbf8" stroke="#19a7a0" stroke-width="1.300"/><rect x="1159.300" y="531.200" width="3.400" height="4" rx="1" fill="none" stroke="#19a7a0" stroke-width="1.100"/>
</svg>
</div></div></div>
<svg class="abs" style="left:106px;top:113px;z-index:5" width="1068" height="577" viewBox="106 113 1068 577"><rect x="110.550" y="117.600" width="1058.800" height="567.700" fill="none" stroke="#8cc63f" stroke-width="1.700"/></svg>
<!-- TASKBAR -->
<svg class="abs" style="left:0;top:686px" width="1280" height="34" viewBox="0 686 1280 34">
 <defs>
  <linearGradient id="edgeg" x1="0" y1="0" x2="1" y2="1"><stop offset="0" stop-color="#35c1f1"/><stop offset=".55" stop-color="#1b75d0"/><stop offset="1" stop-color="#0c59a4"/></linearGradient>
  <linearGradient id="edgeg2" x1="0" y1="1" x2="1" y2="0"><stop offset="0" stop-color="#1d8ad6"/><stop offset=".6" stop-color="#49d668"/><stop offset="1" stop-color="#8be35a"/></linearGradient>
  <linearGradient id="cop2" x1="0" y1="0" x2="1" y2="1"><stop offset="0" stop-color="#2a8ff0"/><stop offset=".3" stop-color="#3cc7a8"/><stop offset=".55" stop-color="#f5c03a"/><stop offset=".75" stop-color="#ef5b86"/><stop offset="1" stop-color="#9b5cf5"/></linearGradient>
  <linearGradient id="sun" x1="0.15" y1="0.05" x2="0.8" y2="1"><stop offset="0" stop-color="#fdc61c"/><stop offset="1" stop-color="#f37512"/></linearGradient>
  <linearGradient id="phg" x1="0" y1="0" x2="1" y2="1"><stop offset="0" stop-color="#2f7fe6"/><stop offset="1" stop-color="#1fc3e8"/></linearGradient>
  <filter id="tb" x="-10%" y="-10%" width="120%" height="120%"><feGaussianBlur stdDeviation="0.45"/></filter>
  <clipPath id="sbclip"><rect x="40.500" y="687" width="239.300" height="33"/></clipPath>
 </defs>
 <rect x="0" y="686" width="1280" height="34" fill="#dde0d9"/>
 <rect x="0" y="686" width="1280" height=".8" fill="#eef1ec"/>
 <!-- start -->
 <g fill="#161616"><rect x="13.300" y="697" width="6.300" height="6.200"/><rect x="20.500" y="697" width="6.300" height="6.200"/><rect x="13.300" y="704.100" width="6.300" height="6.200"/><rect x="20.500" y="704.100" width="6.300" height="6.200"/></g>
 <!-- search -->
 <rect x="40.500" y="687" width="239.300" height="33" fill="#fefefe"/>
 <circle cx="58.300" cy="700.300" r="4.700" fill="none" stroke="#3b3b3b" stroke-width="1.300"/><path d="M54.800 704.200l-4.600 5" stroke="#3b3b3b" stroke-width="1.400"/>
 <text x="73.300" y="708.500" font-size="14.600" fill="#4e4e4e" textLength="38.700" lengthAdjust="spacingAndGlyphs">Пошук</text>
 <g clip-path="url(#sbclip)" filter="url(#tb)">
  <path d="M218.700 714.500q.3-4.500 3.500-6.500 2-4.500 6-5 3.500-.8 5.500 2.500l2 9z" fill="#3a8558"/>
  <path d="M233 704q1.500-3 3.500-1.500 1.500 1.500 1 4z" fill="#44935f"/>
  <path d="M232 714l.8-6 2.700-2.500 3 1.500 1.500 7z" fill="#8c87a0"/>
  <path d="M232.200 714l.6-4 3 .5 2 3.500z" fill="#cbbfae"/>
  <path d="M254.500 712q.5-8 3.500-10 2-1.500 3.500.5l-1 10z" fill="#3f9160"/>
  <path d="M239.500 716.500l2-13.500 2.500-6 3-3.500 1.700-1 2.300 5 2.500 7.500 1.500 11.500z" fill="#75718f"/>
  <path d="M239.500 716.500l2-13.500 2.500-6 3-3.500 1.200 4-1.700 8.500-2 10.500z" fill="#cdc5be"/>
  <path d="M241.800 699.500q1.500-2.500 4-2 1.500 1 1.300 2.800-2.500 1.500-5.300-.8z" fill="#45a04f"/>
  <path d="M246.300 693.500l.9-4.700 1.200 3.200.9-3 1.300 5.500-2 .8z" fill="#3f8f5c"/>
  <path d="M258.700 715l1.800-9 2.200-6.500 2.300-3.300 1.700 4.800 1.500 14z" fill="#a39eb2"/>
  <path d="M264.800 696.300l1.700 4.700 1.500 14h-2.500z" fill="#8a86a0"/>
  <path d="M265.500 717l2-10 2.500-8 10-10v28z" fill="#a9a5b5"/>
  <path d="M265.500 717l2-10 2.500-8 2 1-3 17z" fill="#c9c3c4"/>
  <path d="M269.800 700.500l.5-3.500 9.700-8.500v3.500z" fill="#4aa43f"/>
  <path d="M216.500 720l2.500-5.500q8-2 14-1.200l9 1.500 12.500-1.200 12 1.400 13.500-.5v5.500z" fill="#1fc3cc"/>
  <path d="M216 720l1.500-3q20-.5 34 1t28.500-.5v2.500z" fill="#199fd8"/>
 </g>
 <!-- task view -->
 <g stroke="#222" stroke-width="1.200" fill="none"><rect x="294" y="699.300" width="8.300" height="7.400"/><path d="M292.500 696.400h10.800M292.500 709.600h10.800M306.200 695.800v4.700M306.200 705.500v4.700"/><circle cx="306.200" cy="703" r="1" fill="#222" stroke="none"/></g>
 <!-- running-app underlines -->
 <g fill="#0a74d3"><rect x="326" y="718" width="34.500" height="2"/><rect x="409" y="718" width="34.500" height="2"/><rect x="491" y="718" width="34.500" height="2"/><rect x="615" y="718" width="33" height="2"/><rect x="656.500" y="718" width="34" height="2"/><rect x="695" y="718" width="38.500" height="2"/><rect x="777.500" y="718" width="40.500" height="2"/></g>
 <rect x="644" y="718" width="4" height="2" fill="#5aa5e6"/>
 <rect x="695" y="686.800" width="38.500" height="31.200" fill="#eceeea"/>
 <rect x="777.500" y="686.800" width="40.500" height="31.200" fill="#eef0ec"/>
 <rect x="736" y="686.800" width="41.500" height="31.200" fill="#f8ad74"/>
 <rect x="736" y="718" width="41.500" height="2" fill="#f2691d"/>
 <!-- edge -->
 <g filter="url(#tb)">
  <path d="M332.300 703.500a10.500 10.300 0 0 1 21-1.500q.3 4.500-4.500 5.500-4.500.3-5.300-2.500-.2-2 1.300-3-4-2-7 1-2.500 3.500 0 7 3 3 8 2 -4.500 3.500-9.500 1.500-5-2.800-4-10z" fill="url(#edgeg)"/>
  <path d="M332.400 702.500a10.500 10 0 0 1 20.900-.5q.2 2.500-1.500 4 .3-6.500-6.500-8.500-8.500-1.500-12.900 5z" fill="url(#edgeg2)"/>
 </g>
 <!-- copilot PRE -->
 <g filter="url(#tb)">
  <use href="#copilot" transform="translate(373.800,693.800)"/>
  <rect x="380" y="707.800" width="14.200" height="5.200" rx="1.200" fill="#141416"/>
 </g>
 <text x="381.600" y="712" font-size="4.600" font-weight="bold" fill="#ececec" textLength="11" lengthAdjust="spacingAndGlyphs">PRE65</text>
 <!-- viber -->
 <g filter="url(#tb)">
  <path d="M416.300 701.500q0-8 9.700-8t9.700 8v2.500q0 6.500-8 7.200l-4.200 3.800v-4.300q-7.200-1.200-7.200-6.700z" fill="#7360f2"/>
  <path d="M421.300 698.300q-.8 1.500.8 4.500 1.800 3 4.500 4.200 1.500.5 2.300-.8" stroke="#fff" stroke-width="1.900" fill="none" stroke-linecap="round"/>
  <path d="M426 696.500q4.500.5 5 5" stroke="#e4dcff" stroke-width="1" fill="none"/>
  <rect x="423.600" y="701.300" width="14.400" height="13.400" rx="5.600" fill="#f3312b"/>
 </g>
 <text x="425.800" y="711.700" font-size="9.800" fill="#fff" textLength="10.200" lengthAdjust="spacingAndGlyphs">13</text>
 <!-- outlook -->
 <g filter="url(#tb)">
  <path d="M463 697l7-3.500 7.500 3.500v11q0 2-2 2h-12.500z" fill="#1a8fe0"/>
  <path d="M463 700l7 4 7.500-4.500v9q0 1.500-1.500 1.500h-13z" fill="#35b8f1"/>
  <path d="M466 697.500l4.500-2.500 4.500 2.500v5l-4.500 2.500-4.500-2.500z" fill="#0f5fb5"/>
  <rect x="457" y="698" width="10.500" height="10.500" rx="1.800" fill="#0d63c0"/>
  <ellipse cx="462.200" cy="703.200" rx="2.600" ry="3" fill="none" stroke="#fff" stroke-width="1.400"/>
 </g>
 <!-- explorer -->
 <g filter="url(#tb)">
  <path d="M498 697.500q0-1.500 1.500-1.500h5l2 2h10q1.500 0 1.500 1.500v10.500h-20z" fill="#f3b62c"/>
  <path d="M498 701h20v9.500q0 1.500-1.500 1.500h-17q-1.500 0-1.500-1.500z" fill="#fbd560"/>
  <path d="M502.500 712v-5.500h11v5.500h-2.500v-3h-6v3z" fill="#2a8de0"/>
 </g>
 <!-- copilot -->
 <g filter="url(#tb)"><use href="#copilot" transform="translate(539.300,693.300) scale(1.020)"/></g>
 <!-- acrobat -->
 <rect x="581.300" y="693.600" width="18.600" height="17.600" rx="3" fill="#b30b0f"/>
 <path d="M585.500 707.500q3.500-4 4.800-10 .3-1.600 1.100 0 .8 6 5.600 7.500-6-.8-11.500 2.500z" fill="none" stroke="#fff" stroke-width="1.200"/>
 <!-- word -->
 <g filter="url(#tb)">
  <rect x="622.500" y="693.500" width="18" height="18" fill="#d9e5f7" stroke="#3a6cc0" stroke-width=".9"/>
  <rect x="623" y="704" width="17" height="7" fill="#9fbbe7"/>
  <path d="M632 701q4 1.500 8 .5v9.500h-8z" fill="#f6f8fc"/>
 </g>
 <text x="623.800" y="706.800" font-size="13.500" font-weight="bold" fill="#1f55b3" textLength="12.500" lengthAdjust="spacingAndGlyphs">W</text>
 <!-- photos -->
 <g filter="url(#tb)">
  <rect x="664" y="693.800" width="18.500" height="17.500" rx="2.500" fill="url(#phg)"/>
  <path d="M664 707l7.500-7.500 6 5.500 5-3v6.800q0 2.500-2.500 2.500h-13.500q-2.500 0-2.500-2.500z" fill="#1c5fd0"/>
  <path d="M666 711.300l8-7.500 8.500 7.500z" fill="#38d2ef"/>
  <circle cx="677.800" cy="697.800" r="1.600" fill="#fff"/>
 </g>
 <!-- chrome -->
 <g filter="url(#tb)">
  <circle cx="715" cy="702" r="10.800" fill="#fff"/>
  <path d="M715 691.200a10.800 10.800 0 0 1 9.350 5.400h-9.350a5.400 5.400 0 0 0-4.680 2.700l-4.670-2.700a10.800 10.800 0 0 1 9.350-5.400z" fill="#e8412f"/>
  <path d="M724.350 696.600a10.800 10.800 0 0 1-9.350 16.200l4.680-8.100a5.400 5.400 0 0 0 0-5.400z" fill="#f9bf12"/>
  <path d="M715 712.800a10.800 10.800 0 0 1-9.350-16.200l4.670 8.100a5.400 5.400 0 0 0 4.680 2.700l4.680-2.700z" fill="#2ba04c"/>
  <circle cx="715" cy="702" r="4.200" fill="#3b7de8" stroke="#fff" stroke-width="1"/>
  <circle cx="720.500" cy="708" r="6" fill="#6b5a4d"/><circle cx="720.500" cy="706.300" r="2.600" fill="#d9b49c"/><path d="M716.500 712.500q4-5 8 0z" fill="#2e2e38"/>
 </g>
 <!-- telegram -->
 <g filter="url(#tb)">
  <circle cx="755.800" cy="701.800" r="9.400" fill="#2d9fdc"/>
  <path d="M750 701.700l11.800-4.700-2.100 9.900-3.600-2.600-1.900 1.900-.3-3.100 5.200-4.700-6.600 4z" fill="#fff"/>
  <rect x="753.700" y="705.700" width="14.200" height="8.300" rx="1.800" fill="#ea3a34"/>
 </g>
 <text x="754.900" y="712.600" font-size="7.600" font-weight="bold" fill="#fff" textLength="11.800" lengthAdjust="spacingAndGlyphs">217</text>
 <!-- zoom -->
 <rect x="787.300" y="692" width="20.500" height="20.500" rx="8" fill="#1e63f0" filter="url(#tb)"/>
 <text x="790.800" y="704.300" font-size="5.800" font-weight="bold" fill="#fff" fill-opacity=".88" textLength="12.800" lengthAdjust="spacingAndGlyphs">zoom</text>
 <!-- weather -->
 <circle cx="931.500" cy="703.600" r="8.600" fill="url(#sun)"/>
 <text x="948" y="708.600" font-size="13.800" fill="#2b2b2b" textLength="64.500" lengthAdjust="spacingAndGlyphs" xml:space="preserve">25°C  Sunny</text>
 <!-- tray -->
 <g stroke="#262626" stroke-width="1.200" fill="none">
  <path d="M1033 706l5-5 5 5"/>
  <rect x="1054.500" y="699" width="5.600" height="8" rx="1.200"/><path d="M1060.100 702l2.400-1.500v5l-2.400-1.500M1053 697.800q4.500-2.500 9 0M1053 708.200q4.500 2.500 9 0" stroke-width=".9"/>
  <path d="M1073.800 704.500a4 4 0 0 0 8 0M1077.800 708.500v2.300M1075.300 710.800h5" stroke-width="1.100"/>
  <rect x="1094.300" y="699.500" width="10.500" height="6.500" rx=".8" stroke-width="1"/><path d="M1093 698v3.500M1091.500 699.700h3" stroke-width="1"/>
  <path d="M1112.500 701h2l2.700-2.500v9.500l-2.700-2.500h-2z" stroke-width="1"/><path d="M1119.300 700.500q1.500 2.700 0 5.500M1121.300 699q2.500 4.200 0 8.500" stroke-width=".8" stroke="#777"/>
  <path d="M1135.300 710a5.700 5.700 0 0 1 5.700-5.700M1132.300 710a8.700 8.700 0 0 1 8.700-8.700M1129.300 710a11.700 11.700 0 0 1 11.700-11.700" stroke-width="1.100" stroke="#4a4a4a"/>
  <path d="M1246.500 697h13.300v10.800h-4.200l-2.500 2.500-2.500-2.500h-4.100z" stroke-width="1.100"/>
 </g>
 <rect x="1075.200" y="696.200" width="5.200" height="9.800" rx="2.400" fill="#262626"/>
 <rect x="1095.800" y="701" width="7.500" height="3.500" fill="#262626"/>
 <circle cx="1140.800" cy="709.300" r="1.200" fill="#2b2b2b"/><rect x="1275.800" y="686" width="1" height="34" fill="#bfc2bb"/>
 <text x="1154.500" y="708" font-size="10.500" fill="#2b2b2b" textLength="17" lengthAdjust="spacingAndGlyphs">УКР</text>
 <text x="1196" y="699.500" font-size="10.300" fill="#2b2b2b" textLength="22.300" lengthAdjust="spacingAndGlyphs">14:43</text>
 <text x="1184" y="715" font-size="10.300" fill="#2b2b2b" textLength="46.500" lengthAdjust="spacingAndGlyphs">24.04.2025</text>
</svg>
</div>
</body>
</html>
